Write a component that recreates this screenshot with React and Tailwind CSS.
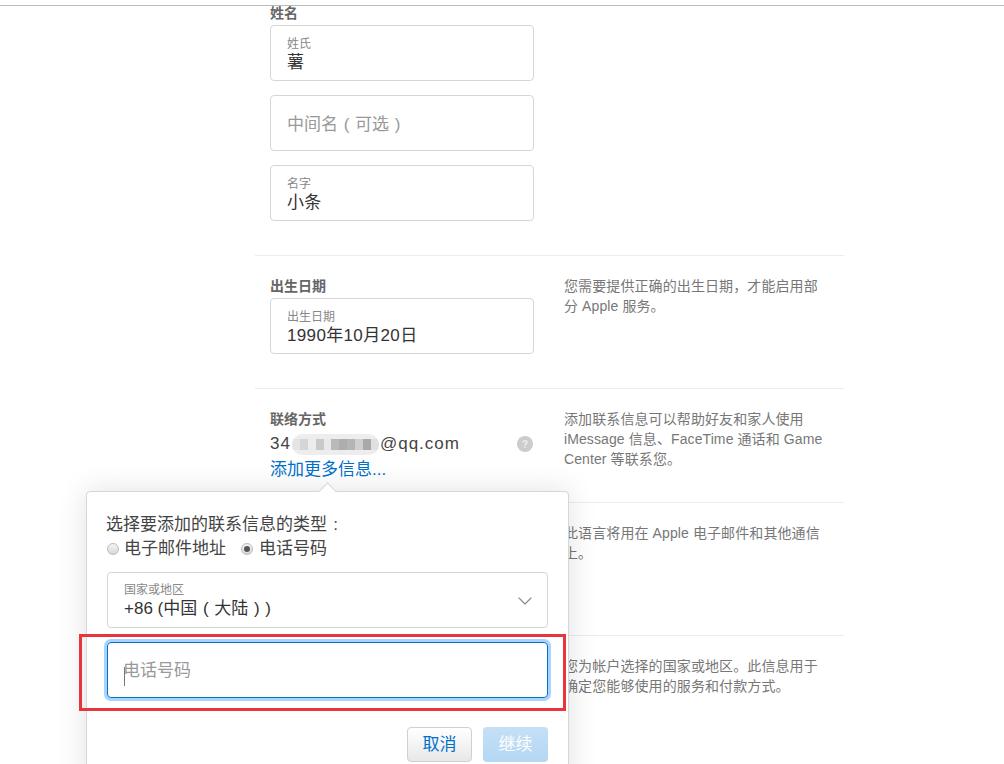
import React from "react";
import { ChevronDown } from "lucide-react";

const FONT = "font-['Liberation_Sans','Noto_Sans_CJK_SC',sans-serif]";

// full-width punctuation sits centred in its cell in this page
function Cell({ children }) {
  return <span className="inline-block w-[1em] text-center">{children}</span>;
}

function Field({ label, value, placeholder, className = "" }) {
  return (
    <div
      className={`flex h-[56px] w-[264px] flex-col justify-center rounded-[4px] border border-[#d6d6d6] bg-white px-4 pt-[4px] ${className}`}
    >
      {label && <div className="h-[15px] text-[12px] leading-[15px] text-[#888]">{label}</div>}
      {value && <div className="h-[22px] text-[17px] leading-[22px] tracking-[0.35px] text-[#333]">{value}</div>}
      {placeholder && <div className="text-[17px] leading-[22px] text-[#999]">{placeholder}</div>}
    </div>
  );
}

function Section({ left, note, className = "" }) {
  return (
    <section className={`flex border-t border-[#ececec] pl-[15px] ${className}`}>
      <div className="w-[264px]">{left}</div>
      <p className="-mt-[1px] ml-[30px] w-[262px] text-[14px] leading-[20px] tracking-[0.1px] text-[#777]">{note}</p>
    </section>
  );
}

function Mosaic() {
  const cells = ["#e4e4e4", "#d5d5d5", "#ececec", "#c9c9c9", "#e8e8e8", "#b9b9b9", "#adadad", "#b5b5b5", "#cfcfcf", "#a9a9a9", "#e0e0e0"];
  return (
    <div className="mx-[1px] flex h-[21px] w-[87px] overflow-hidden rounded-full bg-[#ededed]">
      {cells.map((c, i) => (
        <div key={i} className="my-[5px] h-[11px] flex-1" style={{ backgroundColor: c }} />
      ))}
    </div>
  );
}

function Radio({ checked }) {
  return (
    <span className="flex h-[12px] w-[12px] items-center justify-center rounded-full border border-[#bbb] bg-gradient-to-b from-[#f4f4f4] to-[#d8d8d8]">
      {checked && <span className="h-[6px] w-[6px] rounded-full bg-[#555]" />}
    </span>
  );
}

function Popover() {
  return (
    <div className="absolute left-[86px] top-[491px] h-[300px] w-[483px] rounded-[4px] border border-[#d6d6d6] bg-white px-[20px] pt-[22px] shadow-[0_0_30px_rgba(0,0,0,0.12)]">
      {/* arrow */}
      <div className="absolute left-[234px] top-[-7px] h-[13px] w-[13px] rotate-45 border-l border-t border-[#d6d6d6] bg-white" />
      <div className="relative -ml-[1px] h-[22px] text-[17px] leading-[22px] text-[#444]">
        选择要添加的联系信息的类型<Cell>:</Cell>
      </div>
      <div className="flex h-[25px] items-center text-[17px] text-[#444]">
        <Radio />
        <span className="ml-[5px]">电子邮件地址</span>
        <span className="ml-[15px]"><Radio checked /></span>
        <span className="ml-[6px]">电话号码</span>
      </div>
      <div className="mt-[11px] flex h-[56px] w-[441px] items-center justify-between rounded-[4px] border border-[#d6d6d6] pl-[16px] pr-[10px]">
        <div className="pt-[3px]">
          <div className="h-[15px] text-[12px] leading-[15px] text-[#888]">国家或地区</div>
          <div className="h-[22px] text-[17px] leading-[22px] text-[#333]">
            +86 (中国<Cell>(</Cell>大陆<Cell>)</Cell>)
          </div>
        </div>
        <ChevronDown className="mt-[2px] h-[24px] w-[24px] text-[#888]" strokeWidth={1.1} />
      </div>
      <div className="mt-[14px] flex h-[56px] w-[441px] items-center rounded-[4px] border border-[#0070c9] pl-[15px] pt-[2px] shadow-[0_0_0_3px_rgba(131,192,253,0.7)]">
        <div className="relative text-[17px] leading-[22px] text-[#999]">
          电话号码
          <span className="absolute left-[1px] top-[7px] h-[19px] w-[1px] bg-[#777]" />
        </div>
      </div>
      <div className="mt-[29px] flex w-[441px] justify-end gap-[11px]">
        <button
          type="button"
          className="h-[35px] w-[65px] rounded-[4px] border border-[#d0d0d0] bg-gradient-to-b from-white to-[#e8e8e8] text-[17px] text-[#0070c9]"
        >
          取消
        </button>
        <button
          type="button"
          className="h-[35px] w-[65px] rounded-[4px] bg-gradient-to-b from-[#c4e0f7] to-[#b4d7f3] text-[17px] text-white"
        >
          继续
        </button>
      </div>
    </div>
  );
}

export default function App() {
  return (
    <div className={`relative h-[764px] w-[1004px] overflow-hidden bg-white ${FONT}`}>
      <div className="h-[6px] border-b border-[#bbb]" />
      <main className="ml-[255px] w-[589px]">
        <div className="h-[249px] pl-[15px]">
          <div className="h-[19px] text-[14px] font-bold leading-[14px] text-[#666]">姓名</div>
          <div className="flex flex-col gap-[14px]">
            <Field label="姓氏" value="薯" />
            <Field placeholder={<>中间名<Cell>(</Cell>可选<Cell>)</Cell></>} />
            <Field label="名字" value="小条" />
          </div>
        </div>

        <Section
          className="h-[133px] pt-[21px]"
          left={
            <>
              <div className="h-[21px] text-[14px] font-bold leading-[18px] text-[#666]">出生日期</div>
              <Field label="出生日期" value="1990年10月20日" />
            </>
          }
          note="您需要提供正确的出生日期，才能启用部分 Apple 服务。"
        />

        <Section
          className="h-[114px] pt-[21px]"
          left={
            <>
              <div className="h-[21px] text-[14px] font-bold leading-[18px] text-[#666]">联络方式</div>
              <div className="flex h-[26px] items-center justify-between pr-[1px]">
                <div className="flex items-center text-[17px] tracking-[1px] text-[#444]">
                  34
                  <Mosaic />
                  @qq.com
                </div>
                <span className="flex h-[16px] w-[16px] items-center justify-center rounded-full bg-[#ccc] text-[10px] font-bold text-[#eee]">
                  ?
                </span>
              </div>
              <div className="mt-[2px] text-[17px] leading-[22px] text-[#0070c9]">添加更多信息...</div>
            </>
          }
          note="添加联系信息可以帮助好友和家人使用 iMessage 信息、FaceTime 通话和 Game Center 等联系您。"
        />

        <Section
          className="h-[133px] pt-[21px]"
          note="此语言将用在 Apple 电子邮件和其他通信上。"
        />

        <Section
          className="h-[128px] pt-[21px]"
          note="您为帐户选择的国家或地区。此信息用于确定您能够使用的服务和付款方式。"
        />
      </main>

      <Popover />

      {/* red annotation box */}
      <div className="absolute left-[79px] top-[634px] h-[77px] w-[487px] border-[3px] border-[#e8343c]" />
    </div>
  );
}
